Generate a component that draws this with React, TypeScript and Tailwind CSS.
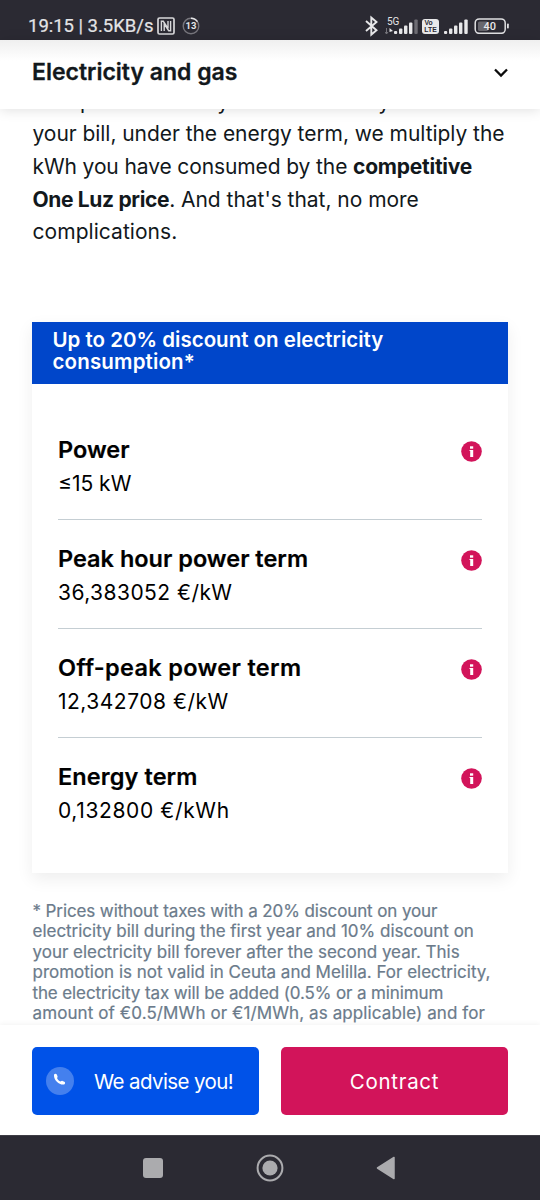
import { ReactNode } from 'react';
import clsx from 'clsx';

const prices = [
    { label: 'Power', value: '≤15 kW', labelClass: 'tracking-[0px]', valueClass: 'tracking-[0px]' },
    { label: 'Peak hour power term', value: '36,383052 €/kW', labelClass: 'tracking-[0px]', valueClass: 'tracking-[0.45px]' },
    { label: 'Off-peak power term', value: '12,342708 €/kW', labelClass: 'tracking-[0.33px]', valueClass: 'tracking-[0.5px]' },
    { label: 'Energy term', value: '0,132800 €/kWh', labelClass: 'tracking-[0.1px]', valueClass: 'tracking-[0.63px]' },
];

const footnote = [
    { text: '* Prices without taxes with a 20% discount on your', className: 'tracking-[-0.11px]' },
    { text: 'electricity bill during the first year and 10% discount on', className: 'tracking-[-0.02px]' },
    { text: 'your electricity bill forever after the second year. This', className: 'tracking-[-0.02px]' },
    { text: 'promotion is not valid in Ceuta and Melilla. For electricity,', className: 'tracking-[-0.01px]' },
    { text: 'the electricity tax will be added (0.5% or a minimum', className: 'tracking-[-0.12px]' },
    { text: 'amount of €0.5/MWh or €1/MWh, as applicable) and for', className: 'tracking-[0.1px]' },
];

function Line({ className, children }: { className?: string; children: ReactNode }) {
    return <span className={clsx('block whitespace-nowrap', className)}>{children}</span>;
}

function Signal({ dim }: { dim?: boolean }) {
    return (
        <svg width="25" height="16" viewBox="0 0 25 16" fill="#e8e8ea">
            <rect x="0" y="12" width="3.2" height="3" rx="1" />
            <rect x="5" y="9.5" width="3.4" height="5.5" rx="1" />
            <rect x="10" y="6.5" width="3.4" height="8.5" rx="1" />
            <rect x="15" y="3.5" width="3.4" height="11.5" rx="1" />
            <rect x="20.3" y="0.5" width="3.4" height="14.5" rx="1" fill={dim ? '#6d6c73' : '#e8e8ea'} />
        </svg>
    );
}

function StatusBar() {
    return (
        <div className="relative h-10 shrink-0 bg-[#2b2a33] text-[#e4e4e6]">
            <div className="flex h-full items-start pt-[15px] pl-[28px] font-[Roboto,sans-serif]">
                <span className="text-[18.5px] leading-[23px] tracking-[-0.02px] whitespace-nowrap [-webkit-text-stroke:0.2px]">19:15 | 3.5KB/s</span>
                <svg className="mt-[2px] ml-[4px]" width="18" height="18" viewBox="0 0 18 18" fill="none" stroke="#d8d8da" strokeWidth="1.7">
                    <rect x="1" y="1" width="16" height="16" rx="1.5" />
                    <path d="M4.4 14V4.3H6.3L11 11.4M13.6 4V13.7H11.7L7.2 6.8V14M11 4V11.4" strokeWidth="1.4" />
                </svg>
                <svg className="mt-[2px] ml-[7px]" width="18" height="18" viewBox="0 0 18 18" fill="none">
                    <circle cx="9" cy="9" r="7.8" stroke="#77767d" strokeWidth="1.4" />
                    <path d="M9 1.2A7.8 7.8 0 0 1 15.5 4.7" stroke="#e4e4e6" strokeWidth="1.4" />
                    <text x="9" y="12.4" textAnchor="middle" fontSize="9.5" fontWeight="700" fill="#e4e4e6">13</text>
                </svg>
            </div>
            <div className="absolute top-[15px] left-[364px] flex items-start font-[Roboto,sans-serif]">
                <svg width="15" height="22" viewBox="0 0 15 22" fill="none" stroke="#e8e8ea" strokeWidth="1.9">
                    <path d="M2 6L12.5 15.2L7.3 19.6V2.6L12.5 7L2 16" />
                </svg>
                <div className="relative ml-[6px] h-[22px] w-[33px]">
                    <span className="absolute top-[1px] left-[2px] text-[10px] leading-[11px]">5G</span>
                    <svg className="absolute top-[13px] left-0" width="8" height="7" viewBox="0 0 8 7">
                        <path d="M1.5 0V6M0 4L1.5 6L3 4" stroke="#77767d" fill="none" />
                        <path d="M4.5 6V0L8 3L4.5 4Z" fill="#e8e8ea" />
                    </svg>
                    <div className="absolute top-[4px] left-[9px]"><Signal dim /></div>
                </div>
                <div className="mt-[4px] ml-[4px] flex h-[15px] w-[17px] flex-col items-center rounded-[3px] bg-[#e8e8ea] pt-[1px] font-['Liberation_Sans',sans-serif] text-[6.8px] leading-[6.5px] font-bold text-[#2b2a33]">
                    <span className="-ml-1">Vo</span>
                    <span>LTE</span>
                </div>
                <div className="mt-[4px] ml-[5px]"><Signal /></div>
                <svg className="mt-[3px] ml-[5px]" width="36" height="16" viewBox="0 0 36 16">
                    <rect x="4" y="3.5" width="10" height="9.5" rx="1.5" fill="#68676e" />
                    <rect x="1.2" y="0.9" width="30" height="14.4" rx="4" fill="none" stroke="#e0e0e2" strokeWidth="1.5" />
                    <rect x="33" y="5.5" width="1.8" height="5" rx="0.8" fill="#e0e0e2" />
                    <text x="15.8" y="12" textAnchor="middle" fontSize="11" fontWeight="500" fill="#e8e8ea">40</text>
                </svg>
            </div>
        </div>
    );
}

function InfoIcon() {
    return (
        <svg width="21" height="21" viewBox="0 0 21 21" fill="#fff">
            <circle cx="10.5" cy="10.5" r="10.3" fill="#d2145a" />
            <rect x="9" y="5.3" width="3.2" height="2.4" />
            <path d="M8.5 9H12.2V16H9.2V10H8.5Z" />
        </svg>
    );
}

export default function App() {
    return (
        <div className="flex h-[1200px] w-[540px] flex-col overflow-hidden bg-white font-[Inter,sans-serif] text-[#12181c]">
            <StatusBar />

            <header className="relative z-10 flex h-[69px] shrink-0 items-center justify-between bg-linear-to-b from-[#efefef] via-white via-30% to-white pr-[32px] pb-[6px] pl-[32px] shadow-[0_1px_12px_rgba(0,0,0,0.13)]">
                <h1 className="text-[23px] leading-7 font-semibold whitespace-nowrap [-webkit-text-stroke:0.3px]">Electricity and gas</h1>
                <svg className="mt-[3px]" width="14" height="10" viewBox="0 0 14 10" fill="none" stroke="#0c0c0c" strokeWidth="2.3">
                    <path d="M1 1.5L7 7.5L13 1.5" />
                </svg>
            </header>

            <main className="min-h-0 flex-1 overflow-hidden px-[32px]">
                <p className="-mt-[23.5px] pl-[0.5px] text-[21px] leading-[32.7px]">
                    <Line className="tracking-[0.25px]">One price for every hour of the day. On</Line>
                    <Line className="tracking-[-0.05px]">your bill, under the energy term, we multiply the</Line>
                    <Line className="tracking-[-0.11px]">kWh you have consumed by the <b className="font-bold tracking-[-0.25px]">competitive</b></Line>
                    <Line className="tracking-[-0.03px]"><b className="font-bold tracking-[-0.35px]">One Luz price</b>. And that's that, no more</Line>
                    <Line className="tracking-[0.05px]">complications.</Line>
                </p>

                <section className="mt-[72.5px] w-[476px] shadow-[0_6px_16px_rgba(0,0,0,0.07)]">
                    <h2 className="h-[62px] bg-[#0046ca] pt-[7px] pl-[20.5px] text-[20.5px] leading-[22px] font-semibold text-white">
                        <Line>Up to 20% discount on electricity</Line>
                        <Line className="tracking-[0.15px]">consumption*</Line>
                    </h2>
                    <div className="h-[489px] bg-white px-[26px] pt-[27px] text-black">
                        {prices.map((p) => (
                            <div key={p.label} className="flex h-[109px] items-start justify-between border-b border-[#c5ced3] pt-[25px] last:border-b-0">
                                <div>
                                    <Line className={clsx('text-[23.5px] leading-[28px] font-semibold [-webkit-text-stroke:0.2px]', p.labelClass)}>{p.label}</Line>
                                    <Line className={clsx('mt-[6px] text-[21px] leading-[28px]', p.valueClass)}>{p.value}</Line>
                                </div>
                                <div className="mt-[5px]"><InfoIcon /></div>
                            </div>
                        ))}
                    </div>
                </section>

                <p className="mt-[28px] pl-[0.5px] text-[17px] leading-[20.5px] text-[#6b7b8b] [-webkit-text-stroke:0.2px]">
                    {footnote.map((l) => (
                        <Line key={l.text} className={l.className}>{l.text}</Line>
                    ))}
                </p>
            </main>

            <div className="relative z-10 flex h-[110px] shrink-0 gap-[22px] bg-white px-[32px] pt-[22px] text-[20.5px] text-white shadow-[0_-1px_5px_rgba(0,0,0,0.05)]">
                <button className="flex h-[68px] w-[227px] items-center rounded-[5px] bg-[#0052e8] pl-[14px]">
                    <span className="flex size-[28px] items-center justify-center rounded-full bg-[#4480ee]">
                        <svg className="-mt-[3px] -ml-[2px]" width="13" height="13" viewBox="0 0 13 13" fill="#fff">
                            <path d="M1.2 1.3C1.8.4 3.2.4 3.8 1.4L4.5 3.3C4.8 4.2 4.1 4.7 4.1 5.3C4.7 6.8 6 8 7.5 8.4C8.2 8.3 8.7 7.7 9.5 7.9L11.4 8.8C12.5 9.4 12.2 10.8 11.2 11.5C6.2 12.6-.2 6.2 1.2 1.3Z" />
                        </svg>
                    </span>
                    <span className="mt-[2px] ml-[20px] tracking-[-0.6px] whitespace-nowrap">We advise you!</span>
                </button>
                <button className="h-[68px] w-[227px] rounded-[5px] bg-[#d2145a] pt-[2px] tracking-[0.7px]">Contract</button>
            </div>

            <nav className="flex h-[65px] shrink-0 items-center border-t border-[#3f3e46] bg-[#2b2a33] pl-[143px]">
                <span className="size-[20px] rounded-[3px] bg-[#ababae]" />
                <svg className="ml-[93px]" width="28" height="28" viewBox="0 0 28 28" fill="#ababae">
                    <circle cx="14" cy="14" r="12.4" fill="none" stroke="#ababae" strokeWidth="2" />
                    <circle cx="14" cy="14" r="7.6" />
                </svg>
                <svg className="ml-[92px]" width="20" height="24" viewBox="0 0 20 24" fill="#ababae" stroke="#ababae" strokeWidth="1.5" strokeLinejoin="round">
                    <path d="M1.5 12L18 1.5V22.5Z" />
                </svg>
            </nav>
        </div>
    );
}
